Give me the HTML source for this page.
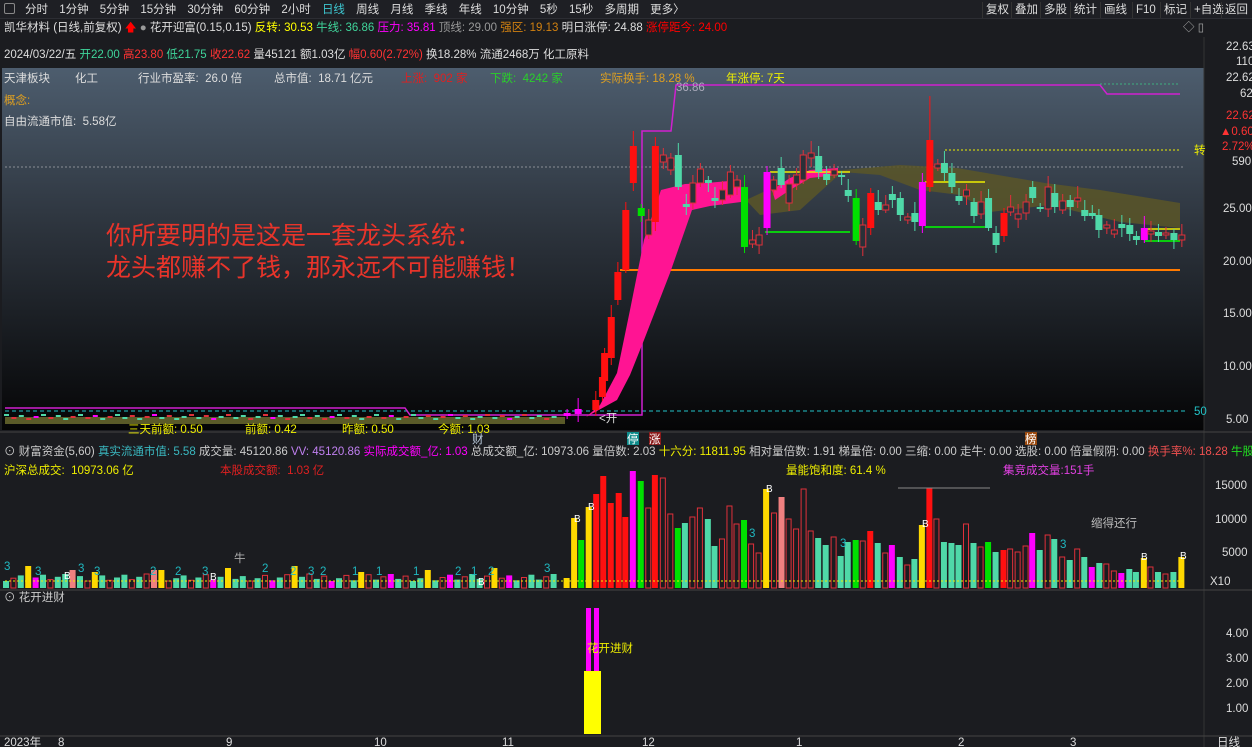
<!DOCTYPE html>
<html><head><meta charset="utf-8"><style>
*{margin:0;padding:0;box-sizing:border-box}
body{width:1252px;height:747px;background:#1b1c20;font-family:"Liberation Sans","Noto Sans CJK SC",sans-serif;font-size:11.5px;color:#ddd;position:relative;overflow:hidden}
.t{position:absolute;white-space:nowrap;line-height:14px}
.btn{position:absolute;top:2px;height:16px;border-left:1px solid #333;padding:0 3px;line-height:16px;color:#ddd}
</style></head><body>
<div style="position:absolute;left:0;top:0;width:1252px;height:19px;background:#1e1f24;border-bottom:1px solid #2c2d33"></div>
<div class="t" style="left:4px;top:3px;width:11px;height:11px;border:1px solid #888;border-radius:2px"></div>
<div class="t" style="left:25px;top:3px;word-spacing:8px">分时 1分钟 5分钟 15分钟 30分钟 60分钟 2小时 <span style="color:#3dc6d0">日线</span> 周线 月线 季线 年线 10分钟 5秒 15秒 多周期 更多〉</div>
<div class="btn" style="left:982px">复权</div><div class="btn" style="left:1011px">叠加</div><div class="btn" style="left:1040px">多股</div><div class="btn" style="left:1070px">统计</div><div class="btn" style="left:1100px">画线</div><div class="btn" style="left:1132px">F10</div><div class="btn" style="left:1160px">标记</div><div class="btn" style="left:1190px">+自选</div><div class="btn" style="left:1221px">返回</div>
<div class="t" style="left:4px;top:21px">凯华材料 (日线,前复权) <span style="color:#f00">🡅</span> <span style="color:#999">●</span> 花开迎富(0.15,0.15) <span style="color:#ff0">反转: 30.53</span> <span style="color:#3fd49a">牛线: 36.86</span> <span style="color:#f0f">压力: 35.81</span> <span style="color:#999">顶线: 29.00</span> <span style="color:#d08010">强区: 19.13</span> 明日涨停: 24.88 <span style="color:#f00">涨停距今: 24.00</span></div>
<div class="t" style="left:1183px;top:21px;color:#aaa">◇ ▯</div>
<div class="t" style="left:4px;top:48px">2024/03/22/五 <span style="color:#3fd49a">开22.00</span> <span style="color:#f33">高23.80</span> <span style="color:#3fd49a">低21.75</span> <span style="color:#f33">收22.62</span> 量45121 额1.03亿 <span style="color:#f33">幅0.60(2.72%)</span> 换18.28% 流通2468万 化工原料</div>
<svg style="position:absolute;left:0;top:0" width="1252" height="747" id="s">
<defs><linearGradient id="bg" x1="0" y1="0" x2="0" y2="1"><stop offset="0" stop-color="#4d5d6e"/><stop offset="0.45" stop-color="#2c333c"/><stop offset="1" stop-color="#050506"/></linearGradient></defs>
<rect x="2" y="68" width="1202" height="362" fill="url(#bg)"/>
<rect x="1204" y="37" width="48" height="395" fill="#1b1c20"/>
<line x1="1204" y1="37" x2="1204" y2="747" stroke="#333"/>
<line x1="0" y1="432" x2="1252" y2="432" stroke="#444"/>
<line x1="0" y1="590" x2="1252" y2="590" stroke="#444"/>
<line x1="0" y1="736" x2="1252" y2="736" stroke="#444"/>
<line x1="5" y1="167" x2="1185" y2="167" stroke="#8a8f96" stroke-dasharray="2,2"/>
<line x1="5" y1="411" x2="1185" y2="411" stroke="#22c4c8" stroke-dasharray="4,3"/>
<line x1="945" y1="150" x2="1180" y2="150" stroke="#ee0" stroke-dasharray="2,2"/>
<line x1="620" y1="270" x2="1180" y2="270" stroke="#ff7a00" stroke-width="2"/>
<polyline fill="none" stroke="#d020d0" stroke-width="1.5" points="5,408 405,408 410,415 642,415 642,131 671,131 676,85 1100,85 1107,94 1180,94"/>
<line x1="1100" y1="84" x2="1180" y2="84" stroke="#3fb080" stroke-dasharray="2,2"/>
<rect x="5" y="417" width="560" height="7" fill="#5a5a28"/>
<polygon fill="#5b5628" opacity="0.85" points="746,200 800,175 842,170 900,165 957,168 1045,183 1100,190 1180,203 1180,228 1120,222 1050,205 990,212 960,195 920,190 880,175 842,172 800,210 760,215"/>
<polygon fill="#ff1493" points="586,417 600,405 617,373 630,310 644,240 661,190 685,184 706,183 741,180 741,202 710,206 692,210 670,273 644,340 630,375 617,400"/>
<polygon fill="#ff1493" points="772,190 790,178 810,170 838,168 838,175 810,178 790,190 775,200"/>
<line x1="765" y1="232" x2="850" y2="232" stroke="#0f0" stroke-width="1.5"/>
<line x1="770" y1="172" x2="850" y2="172" stroke="#ee0" stroke-width="1.5"/>
<line x1="925" y1="227" x2="985" y2="227" stroke="#0f0" stroke-width="1.5"/>
<line x1="925" y1="182" x2="985" y2="182" stroke="#ee0" stroke-width="1.5"/>
<line x1="1145" y1="229" x2="1180" y2="229" stroke="#ee0" stroke-width="1.5"/>
<line x1="1145" y1="241" x2="1180" y2="241" stroke="#0f0" stroke-width="1.5"/>
<g id="cd"></g><g id="vb"></g>
<line x1="5" y1="581" x2="1185" y2="581" stroke="#ee0" stroke-dasharray="2,2"/>
<line x1="898" y1="488" x2="990" y2="488" stroke="#888"/>
<rect x="584" y="671" width="17" height="63" fill="#ff0"/>
<rect x="586" y="608" width="5" height="63" fill="#f0f"/><rect x="594" y="608" width="5" height="63" fill="#f0f"/>
<g fill="#ddd" font-size="11.5" font-family="Liberation Sans,Noto Sans CJK SC,sans-serif">
<text x="1226" y="50">22.63</text><text x="1236" y="65">110</text><text x="1226" y="81">22.62</text><text x="1240" y="97">62</text>
<text x="1226" y="119" fill="#f33">22.62</text><text x="1220" y="135" fill="#f33">▲0.60</text><text x="1222" y="150" fill="#f33">2.72%</text><text x="1232" y="165">590</text>
<text x="1223" y="212">25.00</text><text x="1223" y="265">20.00</text><text x="1223" y="317">15.00</text><text x="1223" y="370">10.00</text><text x="1226" y="423">5.00</text>
<text x="1194" y="154" fill="#ee0">转</text><text x="1194" y="415" fill="#22c4c8">50</text>
<text x="1215" y="489">15000</text><text x="1215" y="523">10000</text><text x="1222" y="556">5000</text><text x="1210" y="585">X10</text>
<text x="1226" y="637">4.00</text><text x="1226" y="662">3.00</text><text x="1226" y="687">2.00</text><text x="1226" y="712">1.00</text>
<text x="4" y="746">2023年</text><text x="58" y="746">8</text><text x="226" y="746">9</text><text x="374" y="746">10</text><text x="502" y="746">11</text><text x="642" y="746">12</text><text x="796" y="746">1</text><text x="958" y="746">2</text><text x="1070" y="746">3</text><text x="1217" y="746">日线</text>
<text x="1091" y="527" fill="#bbb">缩得还行</text>
<text x="587" y="652" fill="#ee0">花开进财</text>
<text x="599" y="422">&lt;开</text>
<text x="128" y="433" fill="#ee0">三天前额: 0.50</text><text x="245" y="433" fill="#ee0">前额: 0.42</text><text x="342" y="433" fill="#ee0">昨额: 0.50</text><text x="438" y="433" fill="#ee0">今额: 1.03</text>
<text x="472" y="443" fill="#bcd">财</text>
<rect x="627" y="432" width="12" height="13" fill="#0e8b8b"/><text x="627" y="443" fill="#fff">停</text>
<rect x="649" y="432" width="12" height="13" fill="#8b1a1a"/><text x="649" y="443" fill="#fff">涨</text>
<rect x="1025" y="432" width="12" height="13" fill="#9a4a10"/><text x="1025" y="443" fill="#fff">榜</text>
<text x="676" y="91" fill="#aab">36.86</text>
<g fill="#20b8c0"><text x="4" y="570">3</text><text x="35" y="575">3</text><text x="78" y="572">3</text><text x="94" y="575">3</text><text x="150" y="575">2</text><text x="175" y="575">2</text><text x="202" y="575">3</text><text x="262" y="572">2</text><text x="290" y="575">2</text><text x="308" y="575">3</text><text x="320" y="575">2</text><text x="352" y="575">1</text><text x="376" y="575">1</text><text x="413" y="575">1</text><text x="455" y="575">2</text><text x="471" y="575">1</text><text x="488" y="575">2</text><text x="544" y="572">3</text><text x="749" y="537">3</text><text x="840" y="547">3</text><text x="1060" y="548">3</text></g>
<g fill="#fff" font-size="10"><text x="64" y="579">B</text><text x="574" y="522">B</text><text x="588" y="510">B</text><text x="766" y="492">B</text><text x="922" y="527">B</text><text x="1141" y="560">B</text><text x="1180" y="559">B</text><text x="210" y="580">B</text><text x="478" y="585">B</text></g>
<text x="234" y="562" fill="#aaa">牛</text>
</g>
</svg>
<div class="t" style="left:4px;top:72px">天津板块</div><div class="t" style="left:75px;top:72px">化工</div><div class="t" style="left:138px;top:72px">行业市盈率:&nbsp; 26.0 倍</div><div class="t" style="left:274px;top:72px">总市值:&nbsp; 18.71 亿元</div>
<div class="t" style="left:401px;top:72px;color:#e02020">上涨:&nbsp; 902 家</div><div class="t" style="left:490px;top:72px;color:#2ad02a">下跌:&nbsp; 4242 家</div><div class="t" style="left:600px;top:72px;color:#e0a020">实际换手: 18.28 %</div><div class="t" style="left:726px;top:72px;color:#ee0">年涨停: 7天</div>
<div class="t" style="left:4px;top:94px;color:#e0a020">概念:</div><div class="t" style="left:4px;top:115px">自由流通市值:&nbsp; 5.58亿</div>
<div class="t" style="left:106px;top:220px;font-size:25px;line-height:32px;color:#e8342a">你所要明的是这是一套龙头系统：<br>龙头都赚不了钱，那永远不可能赚钱！</div>
<div class="t" style="left:4px;top:445px;color:#ccc">⊙ 财富资金(5,60) <span style="color:#3ab8c0">真实流通市值: 5.58</span> 成交量: 45120.86 <span style="color:#c080f0">VV: 45120.86</span> <span style="color:#f0f">实际成交额_亿: 1.03</span> 总成交额_亿: 10973.06 量倍数: 2.03 <span style="color:#ee0">十六分: 11811.95</span> 相对量倍数: 1.91 梯量倍: 0.00 三缩: 0.00 走牛: 0.00 选股: 0.00 倍量假阴: 0.00 <span style="color:#f05050">换手率%: 18.28</span> <span style="color:#2d2">牛股启动: 0.00</span></div>
<div class="t" style="left:4px;top:464px;color:#ee0">沪深总成交:&nbsp; 10973.06 亿</div><div class="t" style="left:220px;top:464px;color:#e02020">本股成交额:&nbsp; 1.03 亿</div>
<div class="t" style="left:786px;top:464px;color:#ee0">量能饱和度: 61.4 %</div><div class="t" style="left:1003px;top:464px;color:#e040e0">集竞成交量:151手</div>
<div class="t" style="left:4px;top:591px;color:#ccc">⊙ 花开进财</div>
<script>
var NS="http://www.w3.org/2000/svg";
function R(g,x,y,w,h,f,s){var r=document.createElementNS(NS,"rect");r.setAttribute("x",x);r.setAttribute("y",y);r.setAttribute("width",w);r.setAttribute("height",Math.max(h,1));r.setAttribute("fill",f);if(s){r.setAttribute("stroke",s);r.setAttribute("stroke-width",1)}g.appendChild(r)}
function L(g,x,y1,y2,c){var l=document.createElementNS(NS,"line");l.setAttribute("x1",x);l.setAttribute("x2",x);l.setAttribute("y1",y1);l.setAttribute("y2",y2);l.setAttribute("stroke",c);g.appendChild(l)}
var C={r:"#ff1010",h:"#e0303a",t:"#4fd8a8",g:"#00e000",m:"#ff00ff",y:"#ffd800",s:"#f08080"};
var cd=document.getElementById("cd"),vb=document.getElementById("vb");
var k=[[15,413,416,"m"],[40,409,414,"m"],[80,400,410,"r"],[95,377,397,"r"],[100,353,381,"r"],[115,317,358,"r"],[130,272,300,"r"],[148,210,270,"r"],[165,146,183,"r"],[183,208,216,"g"],[200,220,235,"h"],[215,146,222,"r"],[233,155,162,"h"],[250,158,170,"h"],[267,155,187,"t"],[285,204,207,"t"],[300,183,203,"h"],[317,169,183,"h"],[335,180,183,"t"],[350,198,201,"t"],[367,190,200,"h"],[385,172,195,"h"],[400,180,187,"h"],[417,187,247,"g"],[435,240,244,"h"],[450,235,245,"h"],[468,172,228,"m"],[483,180,190,"h"],[500,168,185,"t"],[518,184,203,"h"],[535,175,184,"h"],[550,155,180,"h"],[568,153,158,"h"],[585,156,172,"t"],[603,174,180,"t"],[620,170,175,"h"],[637,175,177,"t"],[652,190,196,"t"],[670,198,241,"g"],[685,225,247,"h"],[703,193,228,"r"],[720,202,210,"t"],[737,205,210,"h"],[752,194,200,"t"],[770,198,215,"t"],[787,217,220,"h"],[803,213,222,"t"],[820,182,226,"m"],[837,140,187,"r"],[855,164,168,"h"],[870,163,173,"t"],[887,173,187,"t"],[903,196,201,"t"],[920,190,196,"h"],[937,202,216,"t"],[953,202,214,"h"],[970,198,228,"t"],[987,233,245,"t"],[1005,213,236,"r"],[1020,207,212,"h"],[1037,214,219,"h"],[1055,202,213,"h"],[1070,187,198,"t"],[1087,207,209,"t"],[1105,187,209,"h"],[1120,193,207,"t"],[1138,201,210,"h"],[1155,200,207,"t"],[1172,198,201,"h"],[1188,210,216,"t"],[1205,213,216,"t"],[1220,215,230,"t"],[1238,225,228,"h"],[1255,230,234,"h"],[1272,224,228,"t"],[1290,225,234,"t"],[1305,236,240,"t"],[1323,228,240,"m"],[1338,231,234,"h"],[1355,232,236,"t"],[1372,233,235,"h"],[1390,233,240,"t"],[1408,235,240,"h"]];
k.forEach(function(a,i){var x=560+a[0]/2.266,c=C[a[3]];var wt=a[1]-4-(i*7%9),wb=a[2]+3+(i*5%7);if(a[0]==837)wt=96;if(a[0]==165)wt=131;L(cd,x+0.5,wt,wb,c);if(a[3]=="h")R(cd,x-2.5,a[1],6,a[2]-a[1],"#2a3038",c);else R(cd,x-3,a[1],7,a[2]-a[1],c)});
var cols=["t","h","t","h","m","t","h","t"];
for(var n=0;n<75;n++){var bx=6+n*7.4;var v=(n*37)%11;var col=cols[n%8];var yy=414+(n*13)%5;R(cd,bx-2,yy,5,2,C[col]);var tp=581-v*0.7;if(n%9==3){col="y";tp=572-(n%4)*2}if(n==9||n==20){col="s";tp=570}if(col=="h")R(vb,bx-2.5,tp,5,588-tp,"none",C.h);else R(vb,bx-3,tp,6,588-tp,C[col])}
var vv=[[15,578,"y"],[32,518,"y"],[48,540,"g"],[65,507,"y"],[82,494,"r"],[98,476,"r"],[115,503,"r"],[133,493,"r"],[148,517,"r"],[165,471,"m"],[183,481,"g"],[200,508,"h"],[215,475,"r"],[233,478,"h"],[250,514,"h"],[267,528,"g"],[283,523,"t"],[300,517,"h"],[317,508,"h"],[335,519,"t"],[350,546,"t"],[367,539,"h"],[384,506,"h"],[400,524,"h"],[417,520,"g"],[433,544,"h"],[450,553,"h"],[467,489,"y"],[485,513,"h"],[502,497,"s"],[518,519,"h"],[535,529,"h"],[552,489,"h"],[568,531,"h"],[585,538,"t"],[602,545,"t"],[620,537,"h"],[636,556,"t"],[652,542,"t"],[670,540,"g"],[686,541,"h"],[703,531,"r"],[720,543,"t"],[737,553,"h"],[752,545,"m"],[770,557,"t"],[787,565,"h"],[803,559,"t"],[820,525,"y"],[837,488,"r"],[853,519,"h"],[870,542,"t"],[887,543,"t"],[903,545,"t"],[920,524,"h"],[937,543,"t"],[953,547,"h"],[970,542,"g"],[987,552,"t"],[1005,550,"r"],[1020,549,"h"],[1037,552,"h"],[1055,546,"h"],[1070,533,"m"],[1087,550,"t"],[1105,535,"h"],[1120,539,"t"],[1138,557,"h"],[1155,560,"t"],[1172,549,"h"],[1188,557,"t"],[1205,567,"m"],[1222,563,"t"],[1238,564,"h"],[1255,571,"h"],[1272,573,"m"],[1290,569,"t"],[1305,572,"t"],[1323,558,"y"],[1338,567,"h"],[1355,572,"t"],[1372,574,"h"],[1390,572,"t"],[1408,557,"y"]];
vv.forEach(function(a){var x=560+a[0]/2.266;if(a[2]=="h")R(vb,x-2.5,a[1],5,588-a[1],"none",C.h);else R(vb,x-3,a[1],6,588-a[1],C[a[2]])});
</script>
</body></html>
